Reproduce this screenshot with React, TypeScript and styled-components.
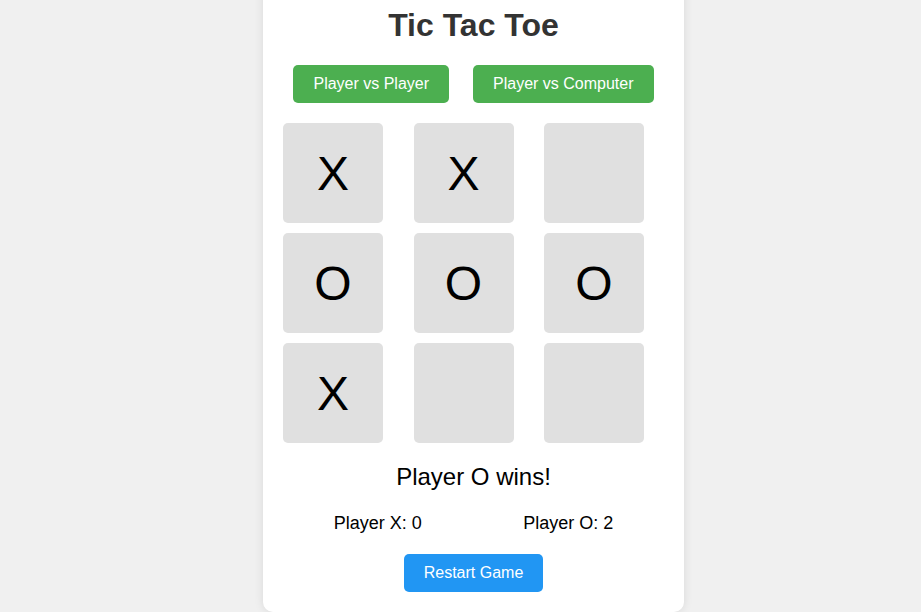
import React from "react";
import styled, { createGlobalStyle } from "styled-components";

const GlobalStyle = createGlobalStyle`
  html, body {
    margin: 0;
    padding: 0;
    background: #f0f0f0;
    font-family: "Liberation Sans", Arial, sans-serif;
    overflow: hidden;
  }
`;

const Page = styled.div`
  height: 100vh;
  display: flex;
  justify-content: center;
  align-items: flex-end;
  padding: 0 0 0 26px;
  box-sizing: border-box;
`;

const Card = styled.div`
  flex-shrink: 0;
  width: 381px;
  padding: 20px;
  background: #ffffff;
  border-radius: 10px;
  box-shadow: 0 0 10px rgba(0, 0, 0, 0.1);
  text-align: center;
`;

const Title = styled.h1`
  margin: 21.44px 0;
  font-size: 32px;
  font-weight: bold;
  color: #333333;
`;

const ModeRow = styled.div`
  display: flex;
  justify-content: center;
  gap: 24px;
`;

const Button = styled.button<{ $variant: "green" | "blue" }>`
  font-family: "Liberation Sans", Arial, sans-serif;
  font-size: 16px;
  line-height: normal;
  padding: 10px 20px;
  border: none;
  border-radius: 5px;
  color: #ffffff;
  background: ${(p) => (p.$variant === "green" ? "#4caf50" : "#2196f3")};
  cursor: pointer;
`;

const Board = styled.div`
  width: 361px;
  margin-top: 20px;
  display: grid;
  grid-template-columns: repeat(3, 100px);
  justify-content: space-between;
  row-gap: 10px;
`;

const Cell = styled.div`
  width: 100px;
  height: 100px;
  background: #e0e0e0;
  border-radius: 5px;
  display: flex;
  align-items: center;
  justify-content: center;
  font-size: 48px;
  color: #000000;
`;

const Status = styled.div`
  margin-top: 20px;
  font-size: 24px;
  color: #000000;
`;

const Scores = styled.div`
  margin-top: 22px;
  display: flex;
  justify-content: space-around;
  font-size: 18px;
  color: #000000;
`;

const RestartRow = styled.div`
  margin-top: 20px;
`;

const board = ["X", "X", "", "O", "O", "O", "X", "", ""];

export default function App() {
  return (
    <>
      <GlobalStyle />
      <Page>
        <Card>
          <Title>Tic Tac Toe</Title>
          <ModeRow>
            <Button $variant="green">Player vs Player</Button>
            <Button $variant="green">Player vs Computer</Button>
          </ModeRow>
          <Board>
            {board.map((v, i) => (
              <Cell key={i}>{v}</Cell>
            ))}
          </Board>
          <Status>Player O wins!</Status>
          <Scores>
            <span>Player X: 0</span>
            <span>Player O: 2</span>
          </Scores>
          <RestartRow>
            <Button $variant="blue">Restart Game</Button>
          </RestartRow>
        </Card>
      </Page>
    </>
  );
}
